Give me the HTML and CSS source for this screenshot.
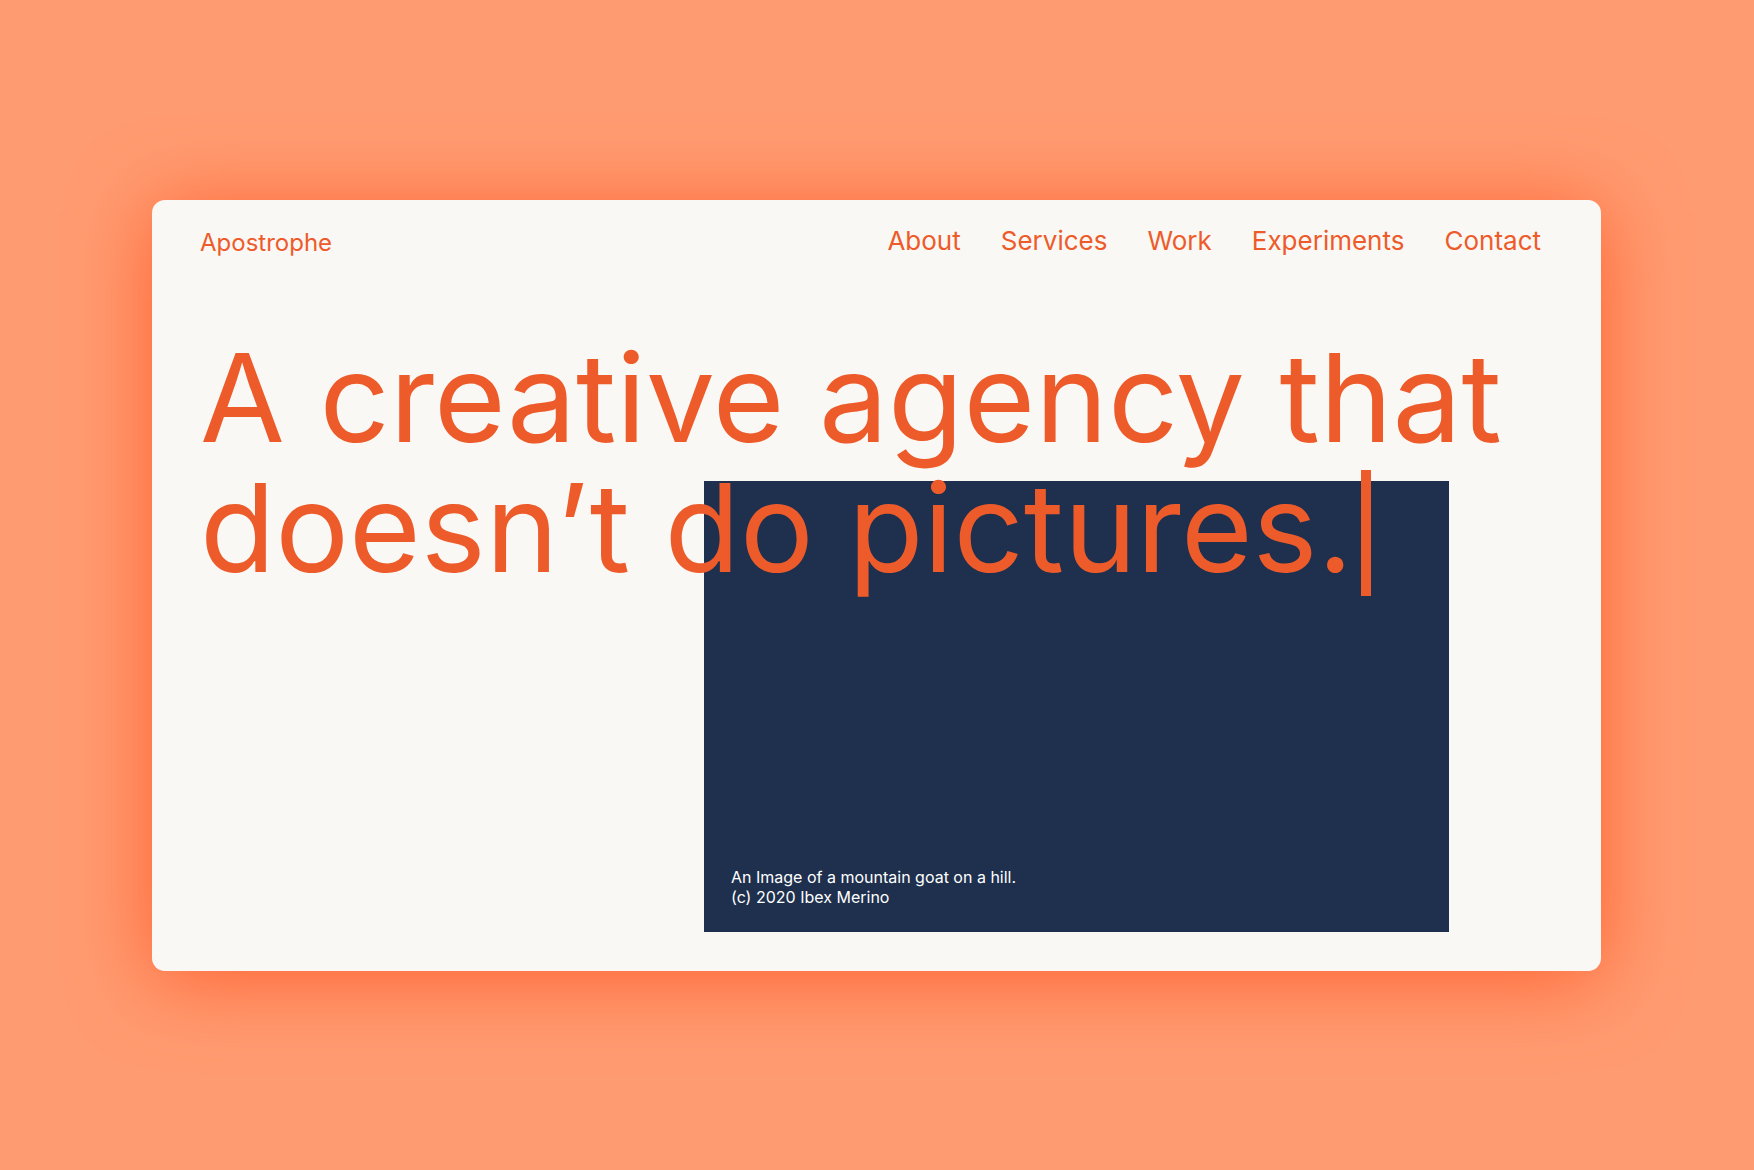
FILE: index.html
```html
<!DOCTYPE html>
<html lang="en">
<head>
  <meta charset="utf-8">
  <meta name="viewport" content="width=device-width, initial-scale=1">
  <title>Apostrophe</title>
  <link rel="stylesheet" href="styles.css">
</head>
<body>
  <div class="card">
    <header class="header">
      <a class="logo" href="#">Apostrophe</a>
      <nav class="nav" aria-label="Main">
        <a class="nav-link" href="#about">About</a>
        <a class="nav-link" href="#services">Services</a>
        <a class="nav-link" href="#work">Work</a>
        <a class="nav-link" href="#experiments">Experiments</a>
        <a class="nav-link" href="#contact">Contact</a>
      </nav>
    </header>
    <main class="hero">
      <figure class="picture">
        <figcaption class="caption">An Image of a mountain goat on a hill.<br>(c) 2020 Ibex Merino</figcaption>
      </figure>
      <h1 class="headline">A creative agency that<br>doesn’t do pictures.<span class="caret"></span></h1>
    </main>
  </div>
</body>
</html>
```
FILE: styles.css
```css
:root {
  --accent: #ee5b2b;
  --paper: #faf8f4;
  --navy: #1e304d;
  --peach: #ff9b71;
}

* {
  box-sizing: border-box;
}

body {
  margin: 0;
  min-height: 100vh;
  padding: 200px 153px 198px 152px;
  background: var(--peach);
  color: var(--accent);
  font-family: Inter, "Liberation Sans", Arial, sans-serif;
}

.card {
  background: var(--paper);
  border-radius: 13px;
  box-shadow: 0 8px 80px #ff6230;
}

.header {
  display: flex;
  justify-content: space-between;
  align-items: flex-start;
  padding: 24px 60px 0 48px;
}

.logo,
.nav-link {
  color: inherit;
  text-decoration: none;
}

.logo {
  font-size: 24px;
  line-height: 38px;
}

.nav {
  display: flex;
  gap: 40px;
  font-size: 26px;
  line-height: 34px;
}

/* The headline and the picture share one grid cell, headline on top. */
.hero {
  display: grid;
}

.headline,
.picture {
  grid-area: 1 / 1;
}

.headline {
  z-index: 1;
  align-self: start;
  margin: 0;
  padding: 71px 0 0 48px;
  font-size: 123px;
  font-weight: 400;
  line-height: 130px;
  white-space: nowrap;
}

.caret {
  display: inline-block;
  width: 10px;
  height: 126px;
  margin-left: 8px;
  vertical-align: -24px;
  background: var(--accent);
}

.picture {
  display: flex;
  align-items: flex-end;
  min-height: 451px;
  margin: 219px 152px 39px 552px;
  padding: 25px 27px;
  background: var(--navy);
}

.caption {
  color: #fff;
  font-size: 16px;
  line-height: 20px;
}
```
